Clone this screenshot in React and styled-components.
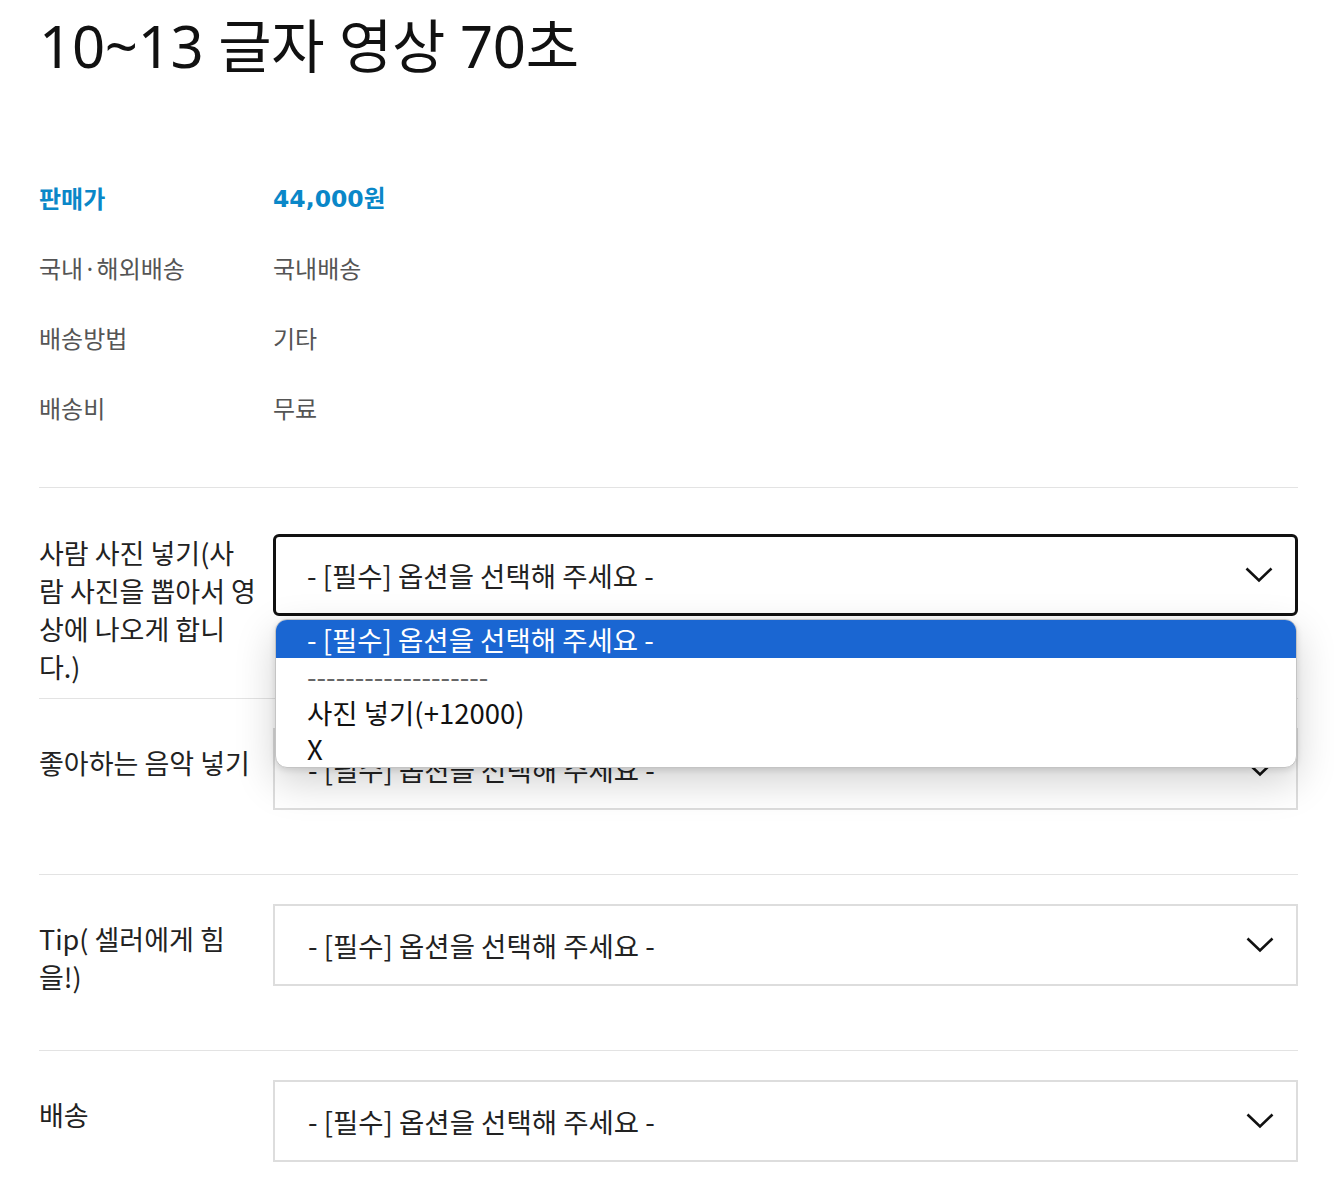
import React from "react";
import styled, { createGlobalStyle } from "styled-components";

const GlobalStyle = createGlobalStyle`
  body {
    margin: 0;
    background: #ffffff;
    font-family: "Noto Sans", "Noto Sans CJK KR", sans-serif;
    color: #222;
  }
`;

const Page = styled.div`
  padding: 0 36px 40px 39px;
`;

const Title = styled.h1`
  margin: 0;
  font-family: "Noto Sans", "Noto Sans CJK KR", sans-serif;
  font-weight: 400;
  font-size: 58px;
  line-height: 92px;
  color: #111;
  letter-spacing: -0.3px;
`;

const InfoTable = styled.div`
  margin-top: 70px;
  padding-bottom: 45px;
  border-bottom: 1px solid #e3e3e3;
`;

const InfoRow = styled.div`
  display: grid;
  grid-template-columns: 234px 1fr;
  align-items: center;
  height: 70px;
  font-family: "Noto Sans CJK KR", sans-serif;
  font-size: 24px;
  color: ${(p) => (p.$price ? "#0a87c8" : "#555")};
  font-weight: ${(p) => (p.$price ? 700 : 400)};
`;

const PriceValue = styled.span`
  font-family: "DejaVu Sans", "Noto Sans CJK KR", sans-serif;
  font-weight: 700;
  font-size: 23.5px;
`;

const OptionRow = styled.div`
  display: grid;
  grid-template-columns: 234px 1fr;
  align-items: start;
  box-sizing: border-box;
  min-height: ${(p) => p.$minHeight || 176}px;
  padding: ${(p) => p.$pad || "29px 0 0"};
  border-bottom: 1px solid #e3e3e3;
  &:last-child {
    border-bottom: none;
  }
`;

const OptionLabel = styled.div`
  width: 217px;
  padding-top: ${(p) => p.$offset || 0}px;
  font-family: "Noto Sans CJK KR", sans-serif;
  font-size: 27px;
  line-height: 38px;
  color: #222;
  word-break: break-all;
`;

const SelectWrap = styled.div`
  position: relative;
`;

const SelectBox = styled.div`
  box-sizing: border-box;
  height: 82px;
  display: flex;
  align-items: center;
  justify-content: space-between;
  padding: 0 22px 0 ${(p) => (p.$focused ? 31 : 33)}px;
  border: ${(p) => (p.$focused ? "3px solid #111" : "2px solid #ddd")};
  border-radius: ${(p) => (p.$focused ? "6px" : "0")};
  background: #fff;
  font-family: "Noto Sans CJK KR", sans-serif;
  font-size: 27.5px;
  color: #222;
`;

const Dropdown = styled.ul`
  position: absolute;
  top: 85px;
  left: 2px;
  right: 1px;
  height: 147px;
  margin: 0;
  padding: 0;
  list-style: none;
  overflow: hidden;
  background: #fff;
  border: 1px solid #c4c4c4;
  border-radius: 12px;
  box-shadow: 0 14px 40px rgba(0, 0, 0, 0.18), 0 2px 6px rgba(0, 0, 0, 0.12);
  z-index: 5;
`;

const OptionItem = styled.li`
  height: ${(p) => (p.$first ? 38 : 36)}px;
  line-height: ${(p) => (p.$first ? 38 : 36)}px;
  padding-left: 31px;
  font-family: "Noto Sans CJK KR", sans-serif;
  font-size: 27.5px;
  white-space: nowrap;
  background: ${(p) => (p.$active ? "#1a66d2" : "transparent")};
  color: ${(p) => (p.$active ? "#fff" : p.$muted ? "#666" : "#111")};
`;

const Chevron = () => (
  <svg width="28" height="16" viewBox="0 0 28 16" fill="none">
    <path d="M1.5 1.5 L14 13.5 L26.5 1.5" stroke="#111" strokeWidth="2.6" />
  </svg>
);

const placeholder = "- [필수] 옵션을 선택해 주세요 -";

const Select = ({ focused, open }) => (
  <SelectWrap>
    <SelectBox $focused={focused}>
      <span>{placeholder}</span>
      <Chevron />
    </SelectBox>
    {open && (
      <Dropdown>
        <OptionItem $first $active>
          {placeholder}
        </OptionItem>
        <OptionItem $muted>-------------------</OptionItem>
        <OptionItem>사진 넣기(+12000)</OptionItem>
        <OptionItem>X</OptionItem>
      </Dropdown>
    )}
  </SelectWrap>
);

const info = [
  ["국내·해외배송", "국내배송"],
  ["배송방법", "기타"],
  ["배송비", "무료"],
];

export default function App() {
  return (
    <Page>
      <GlobalStyle />
      <Title>10~13 글자 영상 70초</Title>

      <InfoTable>
        <InfoRow $price>
          <span>판매가</span>
          <PriceValue>44,000원</PriceValue>
        </InfoRow>
        {info.map(([k, v]) => (
          <InfoRow key={k}>
            <span>{k}</span>
            <span>{v}</span>
          </InfoRow>
        ))}
      </InfoTable>

      <OptionRow $minHeight={211} $pad="46px 0 12px">
        <OptionLabel>사람 사진 넣기(사람 사진을 뽑아서 영상에 나오게 합니다.)</OptionLabel>
        <Select focused open />
      </OptionRow>
      <OptionRow>
        <OptionLabel $offset={16}>좋아하는 음악 넣기</OptionLabel>
        <Select />
      </OptionRow>
      <OptionRow>
        <OptionLabel $offset={16}>Tip( 셀러에게 힘을!)</OptionLabel>
        <Select />
      </OptionRow>
      <OptionRow>
        <OptionLabel $offset={16}>배송</OptionLabel>
        <Select />
      </OptionRow>
    </Page>
  );
}
